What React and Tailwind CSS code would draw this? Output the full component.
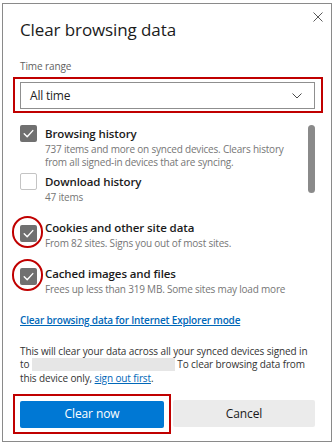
import React from "react";

function Box({ checked }) {
  if (!checked) {
    return <div className="w-[17px] h-[17px] rounded-[2px] border border-[#c4c4c4] bg-white" />;
  }
  return (
    <div className="w-[17px] h-[17px] rounded-[2px] bg-[#707070] flex items-center justify-center">
      <svg width="17" height="17" viewBox="0 0 17 17" fill="none">
        <polyline points="4.2,8.8 7.2,11.8 12.8,5.6" stroke="#ffffff" strokeWidth="1.4" strokeLinecap="round" strokeLinejoin="round" />
      </svg>
    </div>
  );
}

function Circle() {
  return <div className="absolute -left-[8px] -top-[9px] w-[31px] h-[32px] rounded-full border-2 border-[#c00000]" />;
}

export default function App() {
  return (
    <div className="w-[335px] h-[444px] bg-white pt-[3px] pl-[2px] overflow-hidden font-['Open_Sans',sans-serif]">
      <div className="relative w-[330px] h-[439px] border border-[#8a8a8a] pl-[17px] pt-[15px]">
        <div className="absolute top-[8px] right-[8px] w-[10px] h-[10px]">
          <svg width="10" height="10" viewBox="0 0 10 10" fill="none">
            <path d="M0.5 0.5 L9.5 9.5 M9.5 0.5 L0.5 9.5" stroke="#5a5a5a" strokeWidth="1" />
          </svg>
        </div>

        <h1 className="text-[17px] leading-[22px] tracking-[-0.1px] text-[#1b1b1b]">Clear browsing data</h1>

        <div className="mt-[19px] text-[10px] leading-[13px] text-[#5f5f5f] tracking-[-0.1px]">Time range</div>

        <div className="mt-[4px] -ml-[7px] w-[310px] border-2 border-[#c00000] pl-[5px] pt-[3px] pb-[2px]">
          <div className="w-[295px] h-[27px] border border-[#8f8f8f] flex items-center justify-between pl-[9px] pr-[12px]">
            <span className="text-[12px] leading-[16px] text-[#1f1f1f] tracking-[-0.2px]">All time</span>
            <svg width="10" height="6" viewBox="0 0 10 6" fill="none">
              <path d="M0.5 0.5 L5 5 L9.5 0.5" stroke="#4a4a4a" strokeWidth="1" />
            </svg>
          </div>
        </div>

        <div className="absolute left-[305px] top-[121px] w-[7px] h-[68px] rounded-full bg-[#8a8a8a]" />

        <div className="mt-[12px]">
          <div className="flex">
            <div className="relative shrink-0 w-[17px] h-[17px]">
              <Box checked />
            </div>
            <div className="ml-[8px]">
              <div className="mt-[1px] text-[11.5px] leading-[16px] font-semibold text-[#1b1b1b] tracking-[-0.1px] whitespace-nowrap">Browsing history</div>
              <div className="mt-[1px] text-[10px] leading-[13px] text-[#767676] tracking-[-0.2px] whitespace-nowrap">
                737 items and more on synced devices. Clears history
                <br />
                from all signed-in devices that are syncing.
              </div>
            </div>
          </div>

          <div className="flex mt-[4px]">
            <div className="relative shrink-0 w-[17px] h-[17px]">
              <Box checked={false} />
            </div>
            <div className="ml-[8px]">
              <div className="mt-[1px] text-[11.5px] leading-[16px] font-semibold text-[#1b1b1b] tracking-[-0.1px] whitespace-nowrap">Download history</div>
              <div className="mt-[1px] text-[10px] leading-[13px] text-[#767676] tracking-[-0.2px] whitespace-nowrap">47 items</div>
            </div>
          </div>

          <div className="flex mt-[16px]">
            <div className="relative shrink-0 w-[17px] h-[17px] mt-[5px]">
              <Box checked />
              <Circle />
            </div>
            <div className="ml-[8px]">
              <div className="text-[11.5px] leading-[16px] font-semibold text-[#1b1b1b] tracking-[-0.1px] whitespace-nowrap">Cookies and other site data</div>
              <div className="mt-[1px] text-[10px] leading-[13px] text-[#767676] tracking-[-0.2px] whitespace-nowrap">From 82 sites. Signs you out of most sites.</div>
            </div>
          </div>

          <div className="flex mt-[16px]">
            <div className="relative shrink-0 w-[17px] h-[17px] mt-[2px]">
              <Box checked />
              <Circle />
            </div>
            <div className="ml-[8px]">
              <div className="text-[11.5px] leading-[16px] font-semibold text-[#1b1b1b] tracking-[-0.1px] whitespace-nowrap">Cached images and files</div>
              <div className="mt-[1px] text-[10px] leading-[13px] text-[#767676] tracking-[-0.2px] whitespace-nowrap">Frees up less than 319 MB. Some sites may load more</div>
            </div>
          </div>
        </div>

        <div className="mt-[17.5px] text-[10px] leading-[13px] font-semibold text-[#0067b8] underline tracking-[-0.18px] whitespace-nowrap">
          Clear browsing data for Internet Explorer mode
        </div>

        <div className="mt-[18px] text-[10px] leading-[13.5px] text-[#333333] tracking-[-0.12px] whitespace-nowrap">
          This will clear your data across all your synced devices signed in
          <br />
          to <span className="inline-block align-top w-[143px] h-[13px] bg-[#e6e6e6]" /> To clear browsing data from
          <br />
          this device only, <span className="text-[#0067b8] underline">sign out first</span>.
        </div>

        <div className="mt-[9px] -ml-[7px] flex items-center">
          <div className="border-2 border-[#c00000] pl-[5px] pr-[4.7px] py-[4px]">
            <button className="w-[144px] h-[27px] rounded-[2px] bg-[#0078d4] text-white text-[12px] leading-[16px] tracking-[-0.1px]">
              Clear now
            </button>
          </div>
          <button className="ml-[2.3px] w-[142px] h-[27px] rounded-[2px] bg-[#ebebeb] text-[#1a1a1a] text-[12px] leading-[16px] tracking-[-0.1px]">
            Cancel
          </button>
        </div>
      </div>
    </div>
  );
}
